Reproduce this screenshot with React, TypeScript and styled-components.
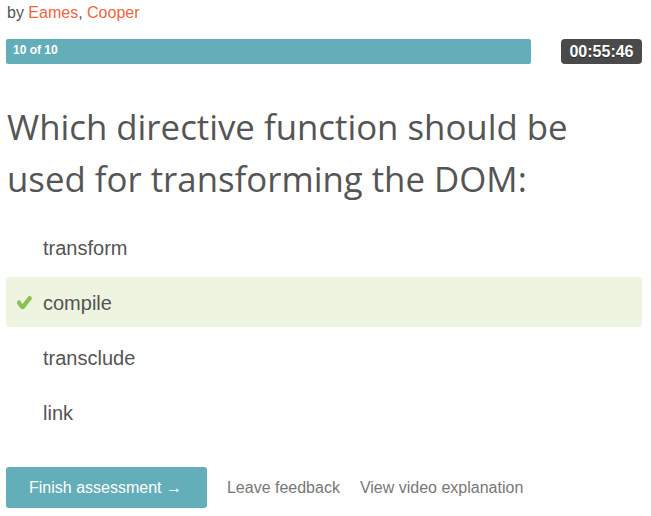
import React from "react";
import styled, { createGlobalStyle } from "styled-components";

const GlobalStyle = createGlobalStyle`
  html, body { margin: 0; padding: 0; background: #fff; }
  body { font-family: "Liberation Sans", Arial, sans-serif; color: #555; }
  * { box-sizing: border-box; }
`;

const Page = styled.div`
  padding: 2px 9px 0 6px;
  width: 651px;
`;

const Byline = styled.div`
  font-size: 16px;
  line-height: 22px;
  color: #555;
  padding-left: 1px;
`;

const Author = styled.a`
  color: #ef6440;
  text-decoration: none;
`;

const StatusRow = styled.div`
  display: flex;
  align-items: flex-start;
  justify-content: space-between;
  margin-top: 15px;
`;

const Progress = styled.div`
  width: 525px;
  height: 25px;
  background: #63aeb8;
  border-radius: 2px;
  color: #fff;
  font-weight: bold;
  font-size: 12px;
  line-height: 14px;
  padding: 4px 0 0 7px;
`;

const Timer = styled.div`
  width: 81px;
  height: 25px;
  background: #4a4a4a;
  border-radius: 4px;
  color: #fff;
  font-weight: bold;
  font-size: 16px;
  line-height: 26px;
  text-align: center;
  text-shadow: 0 1px 1px rgba(0, 0, 0, 0.4);
`;

const Question = styled.h1`
  margin: 37px 0 17px 1px;
  font-family: "Open Sans", sans-serif;
  font-weight: 400;
  font-size: 34.8px;
  line-height: 52px;
  color: #555;
`;

const Options = styled.ul`
  list-style: none;
  margin: 0;
  padding: 0;
  display: flex;
  flex-direction: column;
  gap: 5px;
`;

const Option = styled.li<{ $correct?: boolean }>`
  position: relative;
  height: 50px;
  display: flex;
  align-items: center;
  padding: 3px 0 0 37px;
  font-size: 20px;
  color: #555;
  border-radius: 4px;
  background: ${(p) => (p.$correct ? "#edf4df" : "transparent")};
`;

const Check = styled.svg`
  position: absolute;
  left: 11px;
  top: 19px;
  width: 15px;
  height: 13px;
  fill: #8cc152;
`;

const Actions = styled.div`
  display: flex;
  align-items: center;
  gap: 20px;
  margin-top: 30px;
`;

const PrimaryButton = styled.button`
  height: 41px;
  padding: 0 25px 0 23px;
  border: none;
  border-radius: 3px;
  background: #63aeb8;
  color: #fff;
  font-family: "Liberation Sans", Arial, sans-serif;
  font-size: 16px;
`;

const TextLink = styled.a`
  color: #777;
  font-size: 16px;
  text-decoration: none;
`;

const CheckIcon = () => (
  <Check viewBox="150 380 1530 1030" preserveAspectRatio="none">
    <path d="M1671 566q0 40-28 68l-724 724-136 136q-28 28-68 28t-68-28l-136-136-362-362q-28-28-28-68t28-68l136-136q28-28 68-28t68 28l294 295 656-657q28-28 68-28t68 28l136 136q28 28 28 68z" />
  </Check>
);

const options = [
  { label: "transform" },
  { label: "compile", correct: true },
  { label: "transclude" },
  { label: "link" },
];

export default function App() {
  return (
    <>
      <GlobalStyle />
      <Page>
        <Byline>
          by <Author>Eames</Author>, <Author>Cooper</Author>
        </Byline>
        <StatusRow>
          <Progress>10 of 10</Progress>
          <Timer>00:55:46</Timer>
        </StatusRow>
        <Question>
          Which directive function should be used for transforming the DOM:
        </Question>
        <Options>
          {options.map((o) => (
            <Option key={o.label} $correct={o.correct}>
              {o.correct && <CheckIcon />}
              {o.label}
            </Option>
          ))}
        </Options>
        <Actions>
          <PrimaryButton>Finish assessment →</PrimaryButton>
          <TextLink>Leave feedback</TextLink>
          <TextLink>View video explanation</TextLink>
        </Actions>
      </Page>
    </>
  );
}
